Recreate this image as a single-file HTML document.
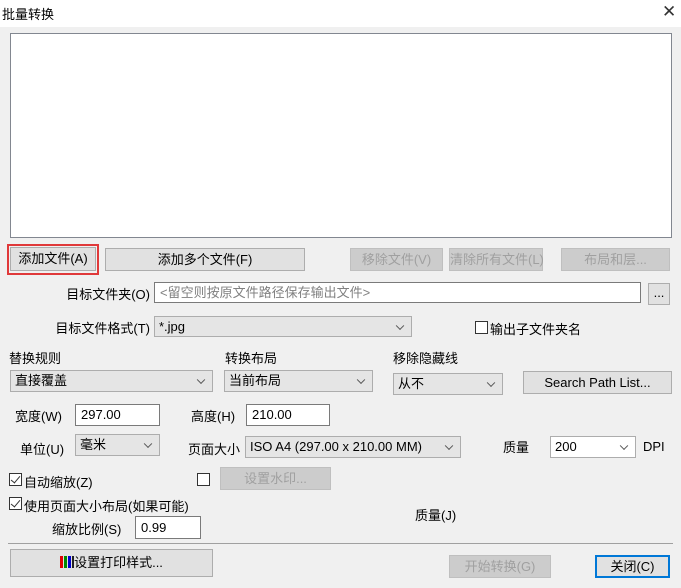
<!DOCTYPE html>
<html><head><meta charset="utf-8"><style>
*{box-sizing:border-box;margin:0;padding:0}
body{width:681px;height:588px;background:#f0f0f0;position:relative;overflow:hidden;font-family:"Liberation Sans","Noto Sans CJK SC",sans-serif;font-size:13px;color:#000}
.a{position:absolute;white-space:nowrap}
.btn{position:absolute;background:#e1e1e1;border:1px solid #adadad;text-align:center;font-size:13px;white-space:nowrap}
.dis{color:#a0a0a0;background:#cccccc;border-color:#bfbfbf}
.inp{position:absolute;background:#fff;border:1px solid #7a7a7a;padding-left:5px;font-size:13px;white-space:nowrap}
.sel{position:absolute;background:#fff;border:1px solid #adadad;padding-left:4px;font-size:13px;white-space:nowrap}
.g{background:#e5e5e5}
.sel:after{content:"";position:absolute;right:8px;top:50%;width:5px;height:5px;border-right:1px solid #555;border-bottom:1px solid #555;transform:translateY(-70%) rotate(45deg)}
.cb{position:absolute;width:13px;height:13px;border:1px solid #333;background:#fff}
.ck:after{content:"";position:absolute;left:3px;top:0px;width:4px;height:8px;border-right:1.5px solid #333;border-bottom:1.5px solid #333;transform:rotate(40deg)}
</style></head><body>
<div class="a" style="left:0;top:0;width:681px;height:27px;background:#fff"></div>
<div class="a" style="left:2px;top:4px;font-size:13px">批量转换</div>
<div class="a" style="left:662px;top:2px;font-size:17px;color:#333">✕</div>
<div class="a" style="left:10px;top:33px;width:662px;height:205px;background:#fff;border:1px solid #828790"></div>

<div class="a" style="left:7px;top:244px;width:92px;height:31px;border:2px solid #e0393a"></div>
<div class="btn" style="left:10px;top:247px;width:86px;height:24px;line-height:22px">添加文件(A)</div>
<div class="btn" style="left:105px;top:248px;width:200px;height:23px;line-height:21px">添加多个文件(F)</div>
<div class="btn dis" style="left:350px;top:248px;width:93px;height:23px;line-height:21px">移除文件(V)</div>
<div class="btn dis" style="left:449px;top:248px;width:94px;height:23px;line-height:21px">清除所有文件(L)</div>
<div class="btn dis" style="left:561px;top:248px;width:109px;height:23px;line-height:21px">布局和层...</div>

<div class="a" style="right:531px;top:284px">目标文件夹(O)</div>
<div class="inp" style="left:154px;top:282px;width:487px;height:21px;line-height:19px;color:#808080">&lt;留空则按原文件路径保存输出文件&gt;</div>
<div class="btn" style="left:648px;top:283px;width:22px;height:22px;line-height:18px">...</div>

<div class="a" style="right:531px;top:318px">目标文件格式(T)</div>
<div class="sel g" style="left:154px;top:316px;width:258px;height:21px;line-height:19px">*.jpg</div>
<div class="cb" style="left:475px;top:321px"></div>
<div class="a" style="left:490px;top:319px">输出子文件夹名</div>

<div class="a" style="left:9px;top:348px">替换规则</div>
<div class="a" style="left:225px;top:348px">转换布局</div>
<div class="a" style="left:393px;top:348px">移除隐藏线</div>
<div class="sel g" style="left:10px;top:370px;width:203px;height:22px;line-height:20px">直接覆盖</div>
<div class="sel g" style="left:224px;top:370px;width:149px;height:22px;line-height:20px">当前布局</div>
<div class="sel g" style="left:393px;top:373px;width:110px;height:22px;line-height:20px">从不</div>
<div class="btn" style="left:523px;top:371px;width:149px;height:23px;line-height:21px">Search Path List...</div>

<div class="a" style="left:15px;top:406px">宽度(W)</div>
<div class="inp" style="left:75px;top:404px;width:85px;height:22px;line-height:20px">297.00</div>
<div class="a" style="left:191px;top:406px">高度(H)</div>
<div class="inp" style="left:246px;top:404px;width:84px;height:22px;line-height:20px">210.00</div>

<div class="a" style="left:20px;top:439px">单位(U)</div>
<div class="sel g" style="left:75px;top:434px;width:85px;height:22px;line-height:20px">毫米</div>
<div class="a" style="left:188px;top:439px">页面大小</div>
<div class="sel g" style="left:245px;top:436px;width:216px;height:22px;line-height:20px">ISO A4 (297.00 x 210.00 MM)</div>
<div class="a" style="left:503px;top:437px">质量</div>
<div class="sel" style="left:550px;top:436px;width:86px;height:22px;line-height:20px">200</div>
<div class="a" style="left:643px;top:439px">DPI</div>

<div class="cb ck" style="left:9px;top:473px"></div>
<div class="a" style="left:24px;top:472px">自动缩放(Z)</div>
<div class="cb" style="left:197px;top:473px"></div>
<div class="btn dis" style="left:220px;top:467px;width:111px;height:23px;line-height:21px">设置水印...</div>

<div class="cb ck" style="left:9px;top:497px"></div>
<div class="a" style="left:24px;top:496px">使用页面大小布局(如果可能)</div>
<div class="a" style="left:415px;top:505px">质量(J)</div>
<div class="a" style="left:52px;top:519px">缩放比例(S)</div>
<div class="inp" style="left:135px;top:516px;width:66px;height:23px;line-height:21px">0.99</div>

<div class="a" style="left:8px;top:543px;width:665px;height:1px;background:#a0a0a0"></div>
<div class="btn" style="left:10px;top:549px;width:203px;height:28px;line-height:26px"><span style="display:inline-block;width:14px;height:12px;vertical-align:-1px;background:linear-gradient(90deg,#d00 0 3px,transparent 3px 4px,#080 4px 7px,transparent 7px 8px,#00c 8px 11px,transparent 11px 12px,#222 12px)"></span>设置打印样式...</div>
<div class="btn dis" style="left:449px;top:555px;width:102px;height:23px;line-height:21px">开始转换(G)</div>
<div class="btn" style="left:595px;top:555px;width:75px;height:23px;line-height:19px;border:2px solid #0078d7">关闭(C)</div>
</body></html>
